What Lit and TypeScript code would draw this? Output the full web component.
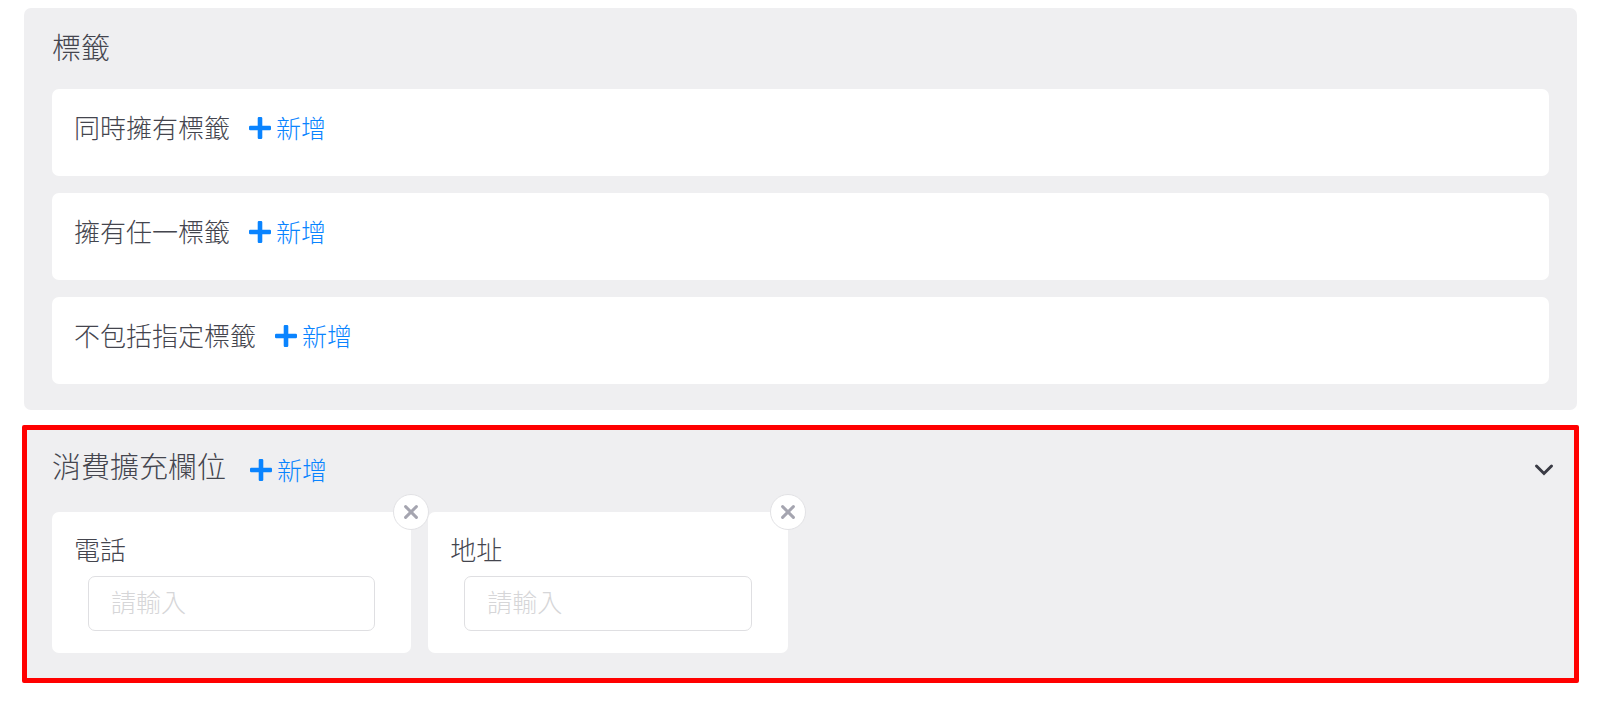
import { LitElement, html, css, svg } from "lit";
import { customElement, property, state } from "lit/decorators.js";

const plusIcon = svg`<svg class="icon" width="22" height="22" viewBox="0 0 22 22" aria-hidden="true">
  <path fill="currentColor" d="M9.9 0h2.2a1.2 1.2 0 0 1 1.2 1.2v7.5h7.5A1.2 1.2 0 0 1 22 9.9v2.2a1.2 1.2 0 0 1-1.2 1.2h-7.5v7.5a1.2 1.2 0 0 1-1.2 1.2H9.9a1.2 1.2 0 0 1-1.2-1.2v-7.5H1.2A1.2 1.2 0 0 1 0 12.1V9.9a1.2 1.2 0 0 1 1.2-1.2h7.5V1.2A1.2 1.2 0 0 1 9.9 0z"/>
</svg>`;

@customElement("add-button")
class AddButton extends LitElement {
  static styles = css`
    :host {
      display: inline-flex;
    }
    .add {
      display: inline-flex;
      align-items: center;
      gap: 5px;
      padding: 0;
      border: 0;
      background: none;
      color: #0a84ff;
      font-family: inherit;
      font-size: 25px;
      font-weight: 300;
      line-height: 36px;
      cursor: pointer;
    }
    .text {
      padding-bottom: 2px;
    }
    .icon {
      display: block;
    }
  `;

  render() {
    return html`<button class="add" type="button">${plusIcon}<span class="text">新增</span></button>`;
  }
}

@customElement("field-card")
class FieldCard extends LitElement {
  static styles = css`
    :host {
      display: block;
      position: relative;
      box-sizing: border-box;
      padding: 18px 22px 22px;
      border-radius: 7px;
      background: #fff;
    }
    .label {
      display: block;
      font-size: 26px;
      line-height: 38px;
    }
    .box {
      padding: 8px 14px 0;
    }
    .input {
      display: block;
      box-sizing: border-box;
      width: 100%;
      height: 55px;
      padding: 0 22px 5px;
      border: 1px solid #dfdfe2;
      border-radius: 7px;
      background: #fff;
      color: inherit;
      font-family: inherit;
      font-size: 25px;
      font-weight: 300;
    }
    .input::placeholder {
      color: #d6d6d8;
      opacity: 1;
    }
    .close {
      position: absolute;
      top: -18px;
      right: -18px;
      z-index: 1;
      display: flex;
      align-items: center;
      justify-content: center;
      box-sizing: border-box;
      width: 36px;
      height: 36px;
      padding: 0;
      border: 1px solid #e2e2e5;
      border-radius: 50%;
      background: #fff;
      color: #a5a5b0;
      cursor: pointer;
    }
  `;

  @property() label = "";

  private remove() {
    this.dispatchEvent(new CustomEvent("remove"));
  }

  render() {
    return html`
      <label class="label" for="value">${this.label}</label>
      <div class="box">
        <input class="input" id="value" type="text" placeholder="請輸入" />
      </div>
      <button class="close" type="button" aria-label="移除" @click=${this.remove}>
        <svg width="16" height="16" viewBox="0 0 16 16" aria-hidden="true">
          <path d="M2.6 2.6l10.8 10.8M13.4 2.6L2.6 13.4" fill="none" stroke="currentColor" stroke-width="3" stroke-linecap="round"/>
        </svg>
      </button>
    `;
  }
}

@customElement("app-root")
class AppRoot extends LitElement {
  static styles = css`
    :host {
      display: block;
      padding: 8px 22px 22px;
      background: #fff;
      color: #44454e;
      font-family: "Noto Sans CJK TC", sans-serif;
      font-weight: 300;
    }
    .panel {
      margin: 0 2px;
      padding: 18px 28px 26px;
      border-radius: 7px;
      background: #efeff1;
    }
    .title {
      margin: 0;
      font-size: 29px;
      font-weight: 300;
      line-height: 40px;
    }
    .groups {
      display: grid;
      gap: 17px;
      margin-top: 23px;
    }
    .group {
      display: flex;
      align-items: center;
      gap: 19px;
      padding: 20px 22px 29px;
      border-radius: 7px;
      background: #fff;
      font-size: 26px;
      line-height: 36px;
    }
    .name {
      padding-bottom: 2px;
    }
    .highlight {
      margin-top: 15px;
      padding: 15px 25px 25px;
      border: 5px solid #f00;
      border-radius: 2px;
      background: #efeff1;
    }
    .header {
      display: flex;
      align-items: flex-start;
      gap: 24px;
    }
    .header add-button {
      padding-top: 6px;
    }
    .toggle {
      margin: 11px -10px 0 auto;
      padding: 5px;
      border: 0;
      background: none;
      color: #3a3b45;
      cursor: pointer;
    }
    .chevron {
      display: block;
    }
    .fields {
      display: flex;
      flex-wrap: wrap;
      gap: 17px;
      margin-top: 23px;
    }
    .field {
      width: 24%;
    }
  `;

  @state() private open = true;
  @state() private fields = ["電話", "地址"];

  private groups = ["同時擁有標籤", "擁有任一標籤", "不包括指定標籤"];

  private toggle() {
    this.open = !this.open;
  }

  private removeField(name: string) {
    this.fields = this.fields.filter((field) => field !== name);
  }

  render() {
    return html`
      <section class="panel">
        <h2 class="title">標籤</h2>
        <div class="groups">
          ${this.groups.map(
            (name) => html`<div class="group"><span class="name">${name}</span><add-button></add-button></div>`
          )}
        </div>
      </section>
      <section class="highlight">
        <div class="header">
          <h2 class="title">消費擴充欄位</h2>
          <add-button></add-button>
          <button class="toggle" type="button" aria-label="展開或收合" aria-expanded=${this.open} @click=${this.toggle}>
            <svg class="chevron" width="20" height="18" viewBox="0 0 20 18" aria-hidden="true">
              <path d="M2.5 5l7.5 7.5L17.5 5" fill="none" stroke="currentColor" stroke-width="3" stroke-linecap="round"/>
            </svg>
          </button>
        </div>
        ${this.open
          ? html`<div class="fields">
              ${this.fields.map(
                (name) => html`<field-card class="field" .label=${name} @remove=${() => this.removeField(name)}></field-card>`
              )}
            </div>`
          : null}
      </section>
    `;
  }
}
